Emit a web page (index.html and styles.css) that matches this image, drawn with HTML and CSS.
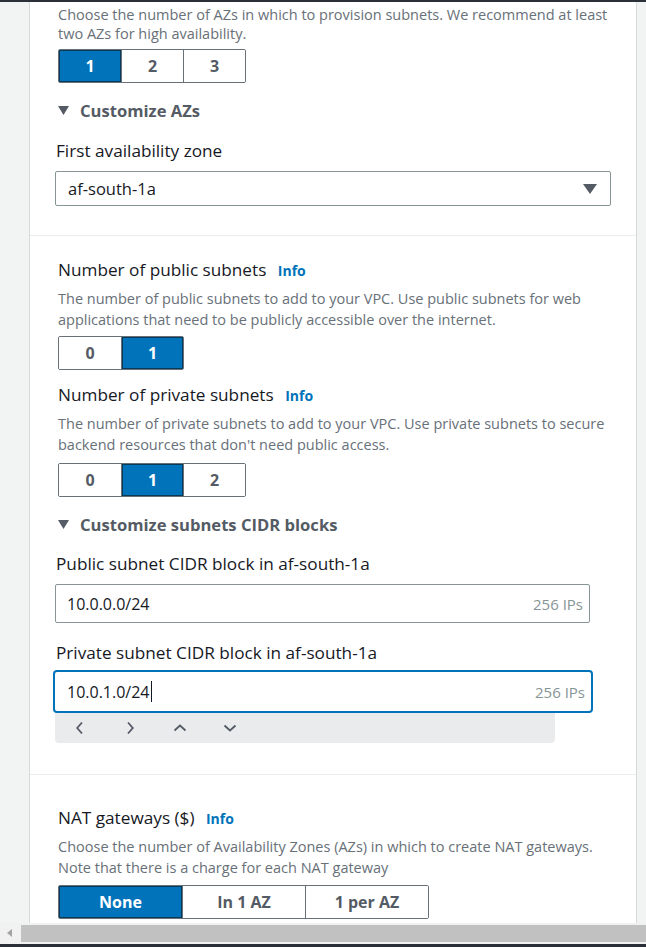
FILE: index.html
```html
<!DOCTYPE html>
<html lang="en">
<head>
<meta charset="utf-8">
<title>VPC settings</title>
<link rel="stylesheet" href="styles.css">
</head>
<body>
<div class="topbar"></div>
<div class="page">
  <div class="gutter-left"></div>
  <main class="panel">
    <section class="section s1">
      <p class="desc">Choose the number of AZs in which to provision subnets. We recommend at least two AZs for high availability.</p>
      <div class="seg seg-sm">
        <button class="seg-btn on">1</button>
        <button class="seg-btn">2</button>
        <button class="seg-btn">3</button>
      </div>
      <div class="expander exp1">
        <svg class="tri" width="11" height="9" viewBox="0 0 11 9"><path d="M0 0H11L5.5 9Z" fill="#545b64"/></svg>
        <span>Customize AZs</span>
      </div>
      <div class="label lab-az">First availability zone</div>
      <div class="select">
        <span>af-south-1a</span>
        <svg class="caret" width="14" height="10" viewBox="0 0 14 10"><path d="M0 0H14L7 10Z" fill="#545b64"/></svg>
      </div>
    </section>

    <section class="section s2">
      <div class="label field-title">Number of public subnets <a class="info">Info</a></div>
      <p class="desc d2">The number of public subnets to add to your VPC. Use public subnets for web applications that need to be publicly accessible over the internet.</p>
      <div class="seg seg-sm">
        <button class="seg-btn">0</button>
        <button class="seg-btn on">1</button>
      </div>
      <div class="label field-title t2">Number of private subnets <a class="info">Info</a></div>
      <p class="desc d2">The number of private subnets to add to your VPC. Use private subnets to secure backend resources that don't need public access.</p>
      <div class="seg seg-sm s3b">
        <button class="seg-btn">0</button>
        <button class="seg-btn on">1</button>
        <button class="seg-btn">2</button>
      </div>
      <div class="expander exp2">
        <svg class="tri" width="11" height="9" viewBox="0 0 11 9"><path d="M0 0H11L5.5 9Z" fill="#545b64"/></svg>
        <span>Customize subnets CIDR blocks</span>
      </div>
      <div class="label lab-cidr1">Public subnet CIDR block in af-south-1a</div>
      <div class="input">
        <span class="val">10.0.0.0/24</span>
        <span class="hint">256 IPs</span>
      </div>
      <div class="label lab-cidr2">Private subnet CIDR block in af-south-1a</div>
      <div class="input-wrap">
        <div class="input focus">
          <span class="val">10.0.1.0/24<span class="cursor"></span></span>
          <span class="hint">256 IPs</span>
        </div>
        <div class="kbbar">
          <span class="kb-key"><svg width="10" height="14" viewBox="0 0 10 14"><path d="M7 1.5L2.2 7L7 12.5" fill="none" stroke="#545b64" stroke-width="1.8"/></svg></span>
          <span class="kb-key"><svg width="10" height="14" viewBox="0 0 10 14"><path d="M3 1.5L7.8 7L3 12.5" fill="none" stroke="#545b64" stroke-width="1.8"/></svg></span>
          <span class="kb-key"><svg width="14" height="10" viewBox="0 0 14 10"><path d="M1.5 7.5L7 2.5L12.5 7.5" fill="none" stroke="#545b64" stroke-width="1.8"/></svg></span>
          <span class="kb-key"><svg width="14" height="10" viewBox="0 0 14 10"><path d="M1.5 2.5L7 7.5L12.5 2.5" fill="none" stroke="#545b64" stroke-width="1.8"/></svg></span>
        </div>
      </div>
    </section>

    <section class="section s3">
      <div class="label field-title">NAT gateways ($) <a class="info">Info</a></div>
      <p class="desc d2">Choose the number of Availability Zones (AZs) in which to create NAT gateways. Note that there is a charge for each NAT gateway</p>
      <div class="seg seg-lg">
        <button class="seg-btn on">None</button>
        <button class="seg-btn">In 1 AZ</button>
        <button class="seg-btn">1 per AZ</button>
      </div>
      <div class="spacer"></div>
    </section>
  </main>
  <div class="gutter-right"></div>
</div>
<div class="hscroll">
  <svg class="hs-arrow" width="6" height="8" viewBox="0 0 6 8"><path d="M5 0V8L0 4Z" fill="#a3a3a3"/></svg>
  <div class="hs-thumb"></div>
</div>
<div class="bottombar"></div>
</body>
</html>
```

FILE: styles.css
```css
* { box-sizing: border-box; }
html, body {
  margin: 0;
  padding: 0;
  height: 947px;
  overflow: hidden;
}
body {
  background: #f2f3f3;
  font-family: "Open Sans", "Noto Sans", sans-serif;
  color: #16191f;
  position: relative;
}
.topbar { height: 2px; background: #2b3038; }
.page { display: flex; align-items: stretch; }
.gutter-left { width: 29px; flex: none; }
.gutter-right { flex: 1; }
.panel {
  width: 608px;
  flex: none;
  background: #fff;
  border-left: 1px solid #d5dbdb;
  border-right: 1px solid #d5dbdb;
}
.section { padding: 0 20px 0 28px; }
.section + .section { border-top: 1px solid #eaeded; }
.desc {
  margin: 0;
  font-size: 14.5px;
  line-height: 21px;
  color: #687078;
}
.s1 { padding-top: 3px; padding-bottom: 29px; }
.s1 .desc { line-height: 19px; }
.seg {
  display: flex;
  margin-top: 6px;
  border: 1px solid #687078;
  border-radius: 2px;
  overflow: hidden;
  width: max-content;
}
.seg-btn {
  font-family: inherit;
  font-weight: 700;
  font-size: 16px;
  color: #545b64;
  background: #fff;
  border: 0;
  border-left: 1px solid #687078;
  height: 32px;
  padding: 0;
  margin: 0;
}
.seg-btn:first-child { border-left: 0; }
.seg-sm .seg-btn { width: 62px; }
.seg-lg .seg-btn { width: 123px; }
.seg-btn.on { background: #0073bb; color: #fff; box-shadow: inset 0 0 0 1px #0a3a5a; }
.expander {
  display: flex;
  align-items: center;
  gap: 11px;
  height: 24px;
  margin-top: 15px;
  font-weight: 700;
  font-size: 16.6px;
  color: #545b64;
}
.label {
  font-size: 17.2px;
  line-height: 22px;
  color: #16191f;
}
.lab-az { margin-top: 18px; margin-left: -2px; }
.select {
  margin-top: 9px;
  margin-left: -3px;
  width: 556px;
  height: 35px;
  border: 1px solid #879596;
  border-radius: 2px;
  display: flex;
  align-items: center;
  justify-content: space-between;
  padding: 0 13px 0 12px;
  font-size: 16.5px;
}
.s2 { padding-top: 23px; padding-bottom: 61px; }
.field-title .info {
  font-size: 14px;
  font-weight: 700;
  color: #0073bb;
  margin-left: 7px;
}
.d2 { margin-top: 6px; }
.t2 { margin-top: 14px; }
.s3b { margin-top: 8px; }
.exp2 { margin-top: 15px; }
.lab-cidr1 { margin-top: 17px; margin-left: -2px; }
.lab-cidr2 { margin-top: 19px; margin-left: -2px; }
.input {
  margin-top: 9px;
  margin-left: -3px;
  width: 535px;
  height: 39px;
  border: 1px solid #879596;
  border-radius: 2px;
  display: flex;
  align-items: center;
  justify-content: space-between;
  padding: 0 6px 0 11px;
  font-size: 16px;
}
.hint { font-size: 15px; color: #879596; }
.input-wrap { position: relative; margin-top: 6px; margin-left: -5px; }
.input.focus {
  margin: 0;
  width: 540px;
  height: 43px;
  border: 2px solid #0073bb;
  border-radius: 4px;
  padding: 0 6px 0 12px;
}
.val { display: inline-flex; align-items: center; }
.cursor { display: inline-block; width: 1px; height: 21px; background: #16191f; margin-left: 1px; }
.kbbar {
  position: absolute;
  left: 2px;
  top: 43px;
  width: 500px;
  height: 30px;
  background: #e9ebed;
  border-radius: 0 0 4px 4px;
  display: flex;
  align-items: center;
}
.kb-key {
  width: 50px;
  display: flex;
  justify-content: center;
  align-items: center;
}
.s3 { padding-top: 32px; }
.seg-lg { margin-top: 7px; }
.spacer { height: 60px; }
.hscroll {
  position: absolute;
  left: 0;
  right: 0;
  top: 923px;
  height: 21px;
  background: #f1f1f1;
}
.hs-arrow { position: absolute; left: 7px; top: 6px; }
.hs-thumb {
  position: absolute;
  left: 21px;
  right: 0;
  top: 2px;
  height: 17px;
  background: #c1c1c1;
}
.bottombar {
  position: absolute;
  left: 0;
  right: 0;
  top: 944px;
  height: 3px;
  background: #2b3038;
}
```
